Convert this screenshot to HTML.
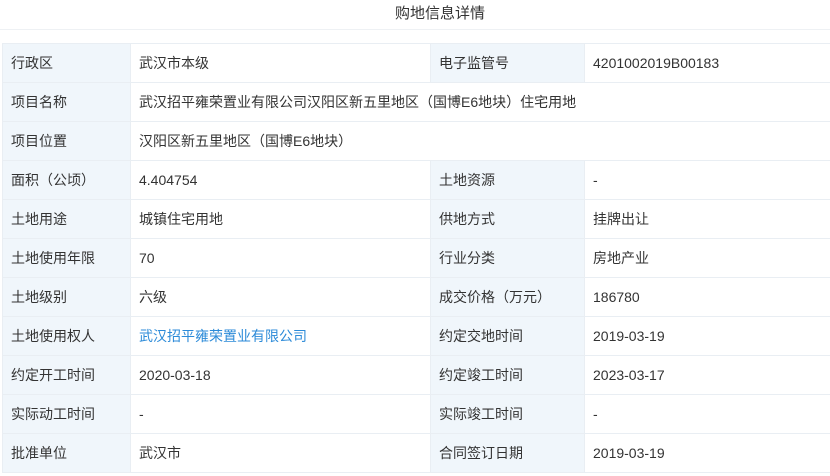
<!DOCTYPE html>
<html><head><meta charset="utf-8"><style>
body{margin:0;width:830px;height:476px;background:#fff;font-family:"Liberation Sans","Noto Sans CJK SC",sans-serif;font-size:14px;color:#333;overflow:hidden;position:relative}
.t{position:absolute;top:2px;left:0;width:880px;text-align:center;font-size:15px;color:#333}
.hl{position:absolute;top:29px;left:0;width:830px;height:1px;background:#eef1f4}
table{position:absolute;top:43px;left:2px;border-collapse:collapse;table-layout:fixed;width:840px}
td{height:38px;border:1px solid #e9eef3;padding:0 0 0 8px;white-space:nowrap;overflow:hidden}
td.l{background:#f0f6fb}
a{color:#2b8ad8;text-decoration:none}
</style></head><body>
<div class="t">购地信息详情</div><div class="hl"></div>
<table>
<col style="width:128px"><col style="width:300px"><col style="width:154px"><col style="width:258px">
<tr><td class="l">行政区</td><td>武汉市本级</td><td class="l">电子监管号</td><td>4201002019B00183</td></tr>
<tr><td class="l">项目名称</td><td colspan="3">武汉招平雍荣置业有限公司汉阳区新五里地区（国博E6地块）住宅用地</td></tr>
<tr><td class="l">项目位置</td><td colspan="3">汉阳区新五里地区（国博E6地块）</td></tr>
<tr><td class="l">面积（公顷）</td><td>4.404754</td><td class="l">土地资源</td><td>-</td></tr>
<tr><td class="l">土地用途</td><td>城镇住宅用地</td><td class="l">供地方式</td><td>挂牌出让</td></tr>
<tr><td class="l">土地使用年限</td><td>70</td><td class="l">行业分类</td><td>房地产业</td></tr>
<tr><td class="l">土地级别</td><td>六级</td><td class="l">成交价格（万元）</td><td>186780</td></tr>
<tr><td class="l">土地使用权人</td><td><a>武汉招平雍荣置业有限公司</a></td><td class="l">约定交地时间</td><td>2019-03-19</td></tr>
<tr><td class="l">约定开工时间</td><td>2020-03-18</td><td class="l">约定竣工时间</td><td>2023-03-17</td></tr>
<tr><td class="l">实际动工时间</td><td>-</td><td class="l">实际竣工时间</td><td>-</td></tr>
<tr><td class="l">批准单位</td><td>武汉市</td><td class="l">合同签订日期</td><td>2019-03-19</td></tr>
</table>
</body></html>
